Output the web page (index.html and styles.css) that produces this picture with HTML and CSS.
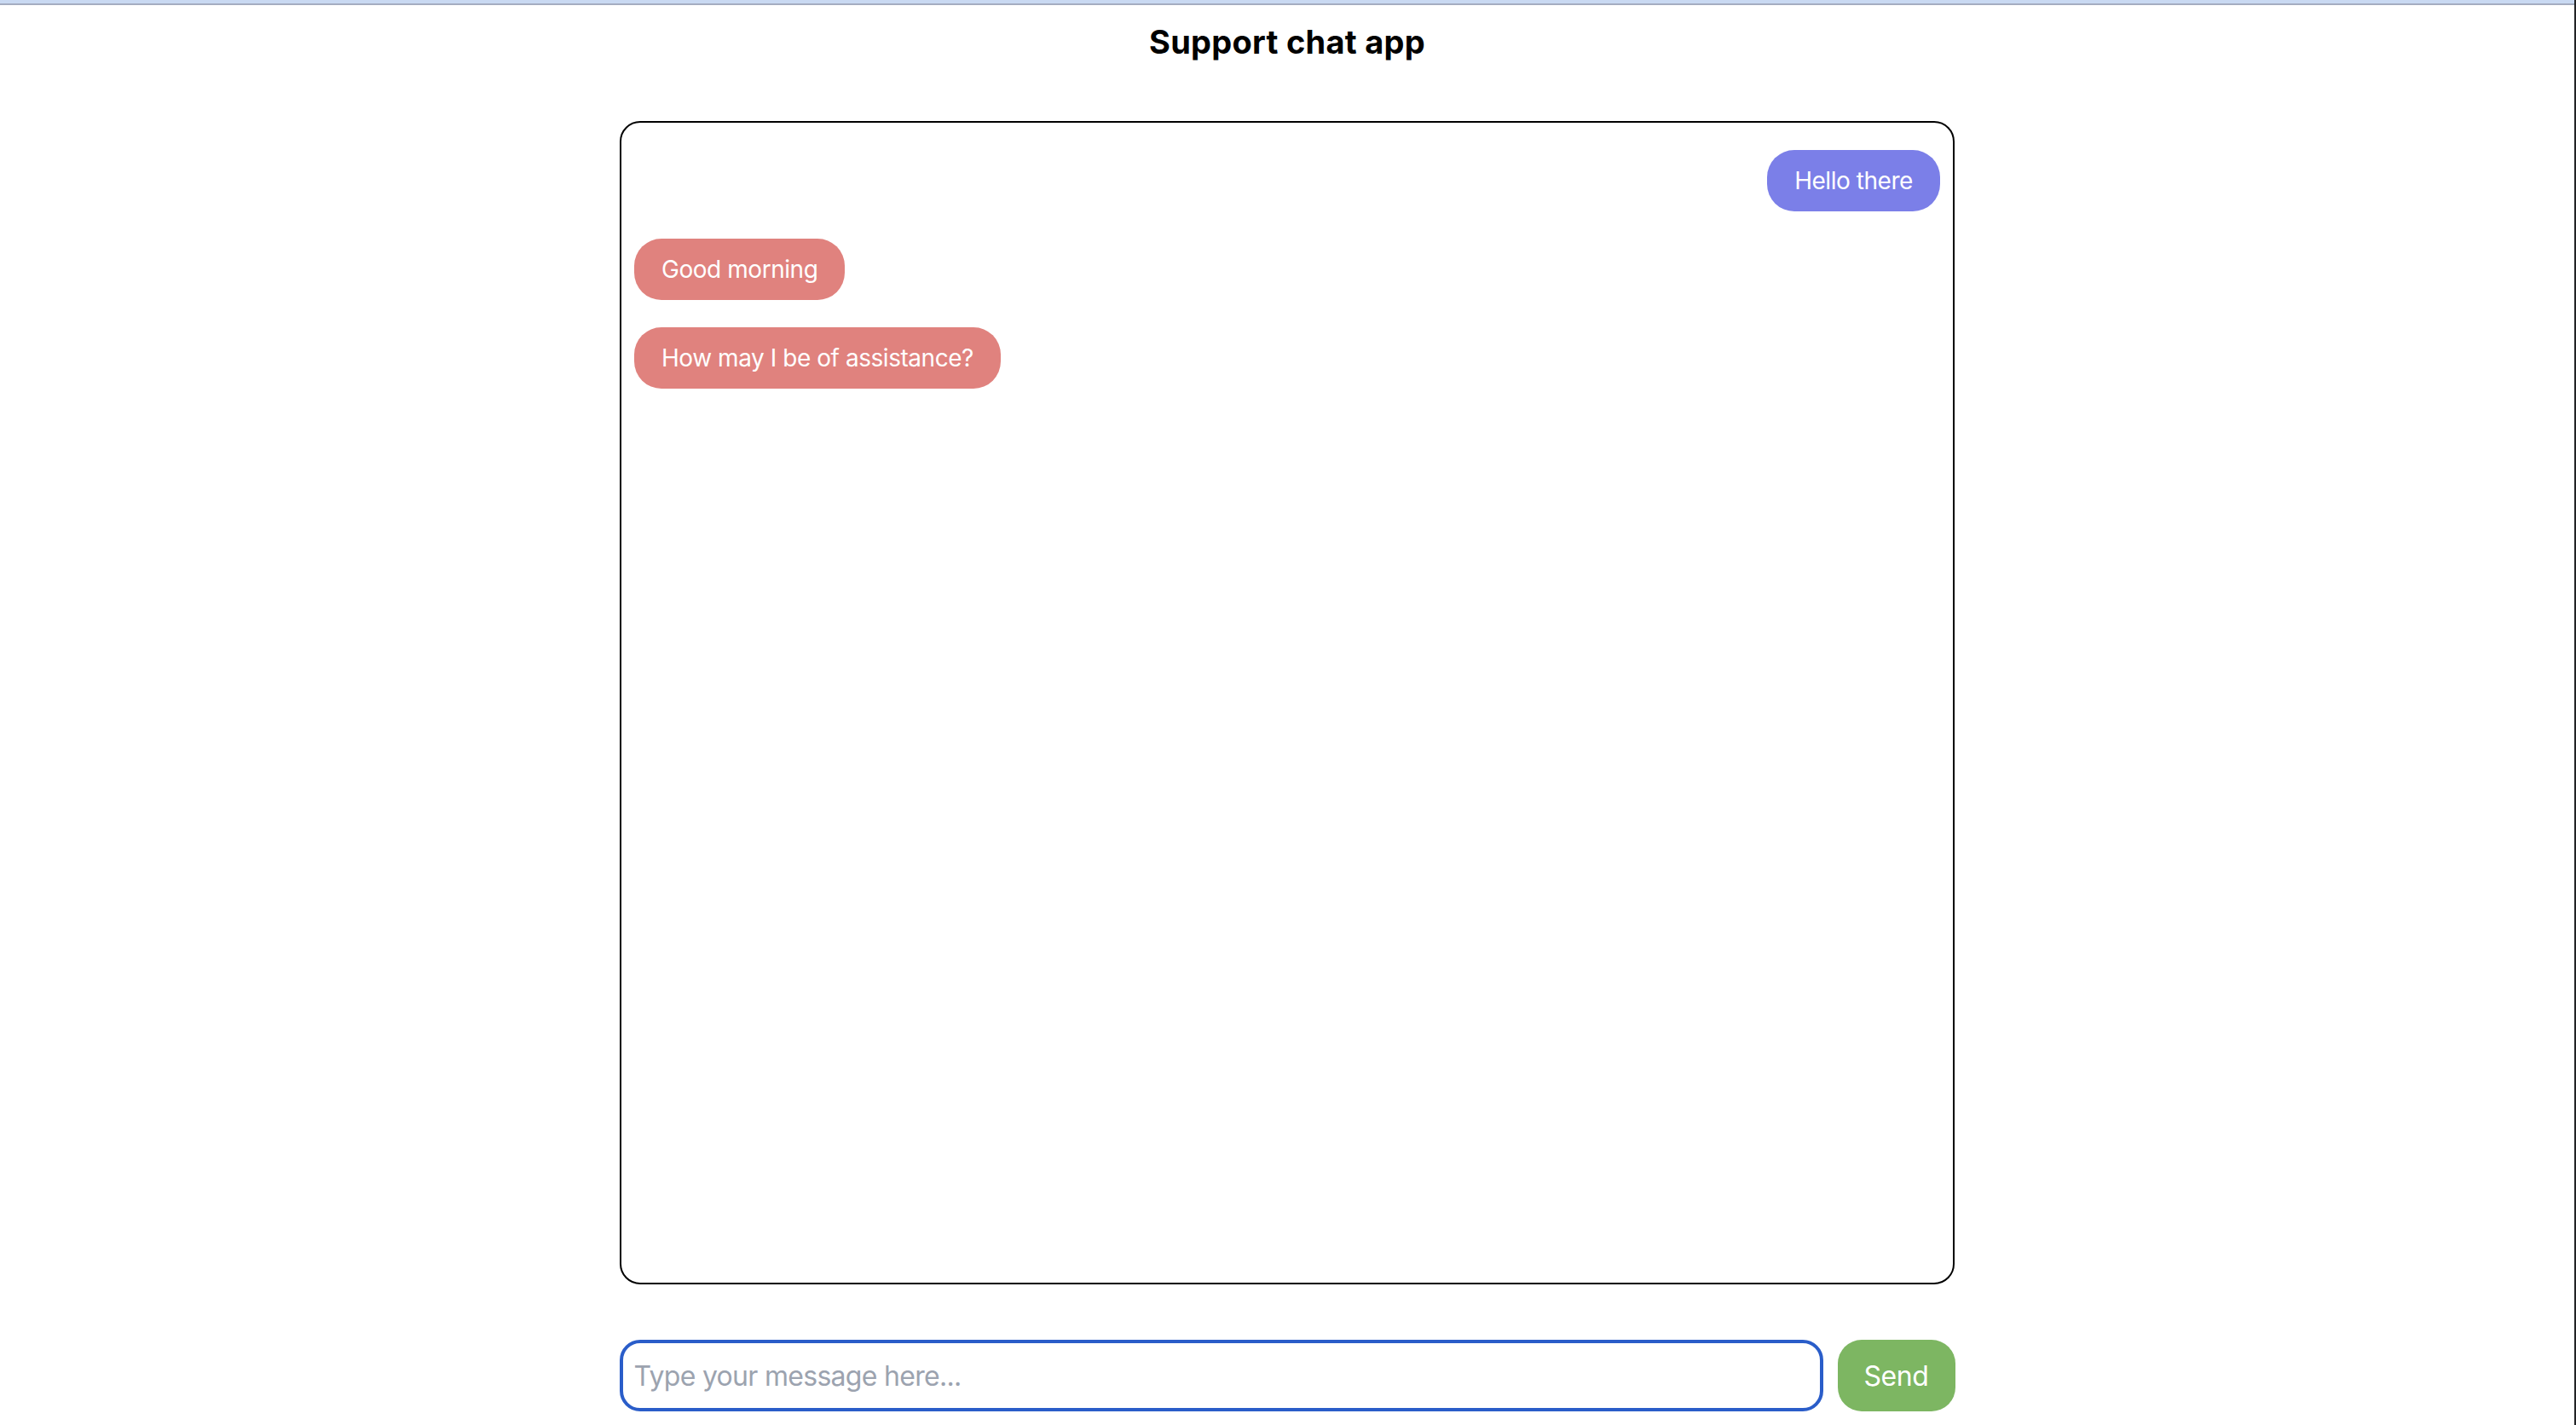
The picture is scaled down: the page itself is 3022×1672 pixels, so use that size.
FILE: index.html
```html
<!DOCTYPE html>
<html lang="en">
<head>
<meta charset="utf-8">
<title>Support chat app</title>
<link rel="stylesheet" href="styles.css">
</head>
<body>
<div class="topbar"></div>
<div class="page">
  <h1 class="title">Support chat app</h1>
  <div class="chat">
    <div class="msg msg-out">Hello there</div>
    <div class="msg msg-in">Good morning</div>
    <div class="msg msg-in">How may I be of assistance?</div>
  </div>
  <form class="composer" onsubmit="return false;">
    <input class="composer-input" type="text" placeholder="Type your message here...">
    <button class="composer-send" type="submit">Send</button>
  </form>
</div>
<div class="edge"></div>
</body>
</html>
```

FILE: styles.css
```css
html, body {
  margin: 0;
  padding: 0;
  background: #ffffff;
  height: 100%;
  overflow: hidden;
}
body {
  font-family: Inter, "Noto Sans", "Liberation Sans", sans-serif;
  color: #000;
  position: relative;
}
.topbar {
  height: 4px;
  background: #c9d9f2;
  border-bottom: 2px solid #a5adc1;
}
.page {
  display: flex;
  flex-direction: column;
  align-items: center;
  padding-right: 2px;
}
.title {
  margin: 20px 0 0 0;
  font-size: 38px;
  line-height: 46px;
  font-weight: 700;
  letter-spacing: 0.25px;
}
.chat {
  margin-top: 70px;
  box-sizing: border-box;
  width: 1566px;
  height: 1365px;
  border: 2px solid #000;
  border-radius: 24px;
  padding: 32px 15px 0 15px;
  display: flex;
  flex-direction: column;
  align-items: flex-start;
  gap: 32px;
}
.msg {
  box-sizing: border-box;
  height: 72px;
  padding: 16px 32px;
  border-radius: 32px;
  font-size: 28px;
  line-height: 40px;
  letter-spacing: -0.45px;
  color: #fff;
  white-space: nowrap;
}
.msg-out {
  align-self: flex-end;
  background: #7b7fe8;
}
.msg-in {
  background: #e0827e;
}
.composer {
  margin: 65px 0 0 0;
  width: 1567px;
  display: flex;
  gap: 17px;
}
.composer-input {
  flex: 1;
  box-sizing: border-box;
  height: 84px;
  border: 4px solid #2a5dc9;
  border-radius: 24px;
  padding: 0 13px;
  font-family: inherit;
  font-size: 32px;
  letter-spacing: -0.7px;
  color: #111;
  outline: none;
  background: #fff;
}
.composer-input::placeholder {
  color: #9ca3af;
}
.composer-send {
  box-sizing: border-box;
  width: 138px;
  height: 84px;
  border: none;
  border-radius: 28px;
  background: #7db662;
  color: #fff;
  font-family: inherit;
  font-size: 32px;
  letter-spacing: -0.4px;
  padding: 0;
}
.edge {
  position: absolute;
  top: 0;
  right: 0;
  width: 2px;
  height: 100%;
  background: #222326;
}
```
